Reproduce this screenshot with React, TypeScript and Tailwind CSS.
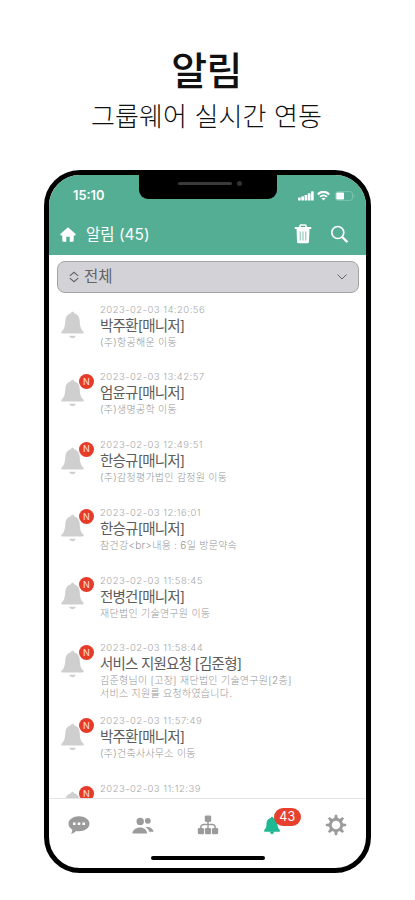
interface Notice {
  date: string
  title?: string
  body?: string[]
  isNew: boolean
}

const notices: Notice[] = [
  { date: "2023-02-03 14:20:56", title: "박주환[매니저]", body: ["(주)항공해운 이동"], isNew: false },
  { date: "2023-02-03 13:42:57", title: "엄윤규[매니저]", body: ["(주)생명공학 이동"], isNew: true },
  { date: "2023-02-03 12:49:51", title: "한승규[매니저]", body: ["(주)감정평가법인 감정원 이동"], isNew: true },
  { date: "2023-02-03 12:16:01", title: "한승규[매니저]", body: ["참건강<br>내용 : 6일 방문약속"], isNew: true },
  { date: "2023-02-03 11:58:45", title: "전병건[매니저]", body: ["재단법인 기술연구원 이동"], isNew: true },
  {
    date: "2023-02-03 11:58:44",
    title: "서비스 지원요청 [김준형]",
    body: ["김준형님이 [고장] 재단법인 기술연구원[2층]", "서비스 지원를 요청하였습니다."],
    isNew: true,
  },
  { date: "2023-02-03 11:57:49", title: "박주환[매니저]", body: ["(주)건축사사무소 이동"], isNew: true },
  { date: "2023-02-03 11:12:39", isNew: true },
]

const gearAngles = [0, 45, 90, 135, 180, 225, 270, 315]

function BellIcon() {
  return (
    <svg viewBox="0 0 23 28" className="h-7 w-[23px] fill-[#cfcfcf]">
      <path d="M11.5.8c1 0 1.500.7 1.600 1.500 3.500.9 5.400 3.600 5.600 7.300.2 5.200.8 8.400 3.600 11 .9.900.500 1.900-.7 1.900H1.400c-1.200 0-1.600-1-.7-1.900 2.800-2.600 3.400-5.800 3.600-11 .2-3.700 2.100-6.400 5.600-7.300.1-.8.6-1.500 1.600-1.500z" />
      <path d="M8.200 24.800h6.600c-.6 1.600-1.600 2.400-3.300 2.400s-2.700-.8-3.300-2.400z" />
    </svg>
  )
}

function StatusIcons() {
  return (
    <div className="flex items-center text-white">
      <svg viewBox="0 0 16 10" className="h-2.5 w-4" fill="currentColor">
        <rect x="0" y="6.5" width="2.7" height="3" rx="0.6" />
        <rect x="3.3" y="5.3" width="2.7" height="4.2" rx="0.6" />
        <rect x="6.6" y="4" width="2.7" height="5.5" rx="0.6" />
        <rect x="9.8" y="2.2" width="2.7" height="7.3" rx="0.6" />
        <rect x="13" y="0.3" width="2.7" height="9.2" rx="0.6" />
      </svg>
      <svg viewBox="0 0 13 10" className="ml-[3px] h-2.5 w-[13px]" fill="none" stroke="currentColor">
        <path d="M.8 3.5C4-.1 9-.1 12.2 3.5" strokeWidth="2.2" />
        <path d="M3 5.9C5 3.8 8 3.8 10 5.9" strokeWidth="1.9" />
        <path d="M6.5 9.500 4.500 7.500Q6.500 5.900 8.500 7.500Z" fill="currentColor" stroke="none" />
      </svg>
      <svg viewBox="0 0 20 10" className="ml-[5px] h-2.5 w-5">
        <rect x="0.5" y="0.5" width="17" height="9" rx="2.5" fill="none" stroke="#79c2aa" />
        <rect x="1.3" y="1.400" width="7.700" height="7.200" rx="1" fill="currentColor" />
        <path d="M19 3.500v3" stroke="#79c2aa" />
      </svg>
    </div>
  )
}

function Header() {
  return (
    <header className="h-20 shrink-0 bg-[#54ae94] text-white">
      <div className="flex h-10 items-center justify-between pl-6 pr-[11px] pt-px">
        <span className="text-[12.8px] font-semibold">15:10</span>
        <StatusIcons />
      </div>
      <div className="flex h-[38px] items-center pl-[11px] pr-[17px]">
        <svg viewBox="0 0 16 15" className="h-[15px] w-4" fill="currentColor">
          <path d="M8 .3 15.900 7.300 15 8.500H13.700V13.700Q13.700 14.700 12.700 14.700H9.700V9.700H6.300V14.700H3.300Q2.300 14.700 2.300 13.700V8.500H1L.1 7.300Z" />
        </svg>
        <h2 className="ml-[10px] pt-0.5 text-[15.5px]">알림 (45)</h2>
        <svg viewBox="0 0 18 20" className="ml-auto h-5 w-[18px]">
          <path d="M6 3V1.800Q6 1 6.800 1h4.400q.8 0 .8.8V3" fill="none" stroke="currentColor" strokeWidth="1.600" />
          <path d="M.8 3h16.400v2H.8zM2.500 5h13l-.5 12.700q-.1 1.600-1.600 1.600H4.600q-1.500 0-1.600-1.600z" fill="currentColor" />
          <path d="M6.200 7.500v9M9 7.500v9M11.800 7.500v9" stroke="#7fc4ae" strokeWidth="1" />
        </svg>
        <svg viewBox="0 0 19 19" className="ml-[18px] h-[19px] w-[19px]" fill="none" stroke="currentColor">
          <circle cx="7.800" cy="7.500" r="6" strokeWidth="1.700" />
          <path d="m12.200 12 5.200 5.200" strokeWidth="2.400" />
        </svg>
      </div>
    </header>
  )
}

function NoticeRow({ notice }: { notice: Notice }) {
  const lines = notice.body ?? []

  return (
    <li className={lines.length > 1 ? "flex h-[73px] shrink-0" : "flex h-[67.8px] shrink-0"}>
      <div className="relative ml-3 mt-2 h-7 w-[23px]">
        <BellIcon />
        {notice.isNew && (
          <span className="absolute -top-[5px] left-[18px] flex h-[15px] w-[15px] items-center justify-center rounded-full bg-[#e63b29] text-[9px] font-medium text-[#ffd0c9]">
            N
          </span>
        )}
      </div>
      <div className="ml-4 whitespace-nowrap pt-[0.5px]">
        <p className="h-3 text-[9.5px] font-light leading-3 tracking-[0.48px] text-[#a8a8a8]">{notice.date}</p>
        {notice.title && (
          <p className="h-5 text-[14.5px] leading-5 tracking-[-0.78px] text-[#5c5c5c]">{notice.title}</p>
        )}
        {lines.map((line) => (
          <p key={line} className="h-[13px] text-[10px] font-light leading-[13px] tracking-[0.27px] text-[#969696]">
            {line}
          </p>
        ))}
      </div>
    </li>
  )
}

function TabBar() {
  return (
    <nav className="h-[70px] shrink-0 border-t border-[#e5e5e5] text-[#9b9b9b]">
      <div className="flex h-[52px] items-center justify-between px-[19px]">
        <svg viewBox="0 0 22 20" className="h-5 w-[22px]">
          <path
            d="M11 1.300c5.800 0 10.500 3.200 10.500 7.500s-4.700 7.500-10.500 7.500c-1 0-2-.1-2.900-.3-1.300 1.400-3 2.500-5.300 2.800 1-1.100 1.600-2.500 1.400-4.300C1.900 13.100.5 11.100.5 8.800.5 4.500 5.200 1.300 11 1.300z"
            fill="currentColor"
          />
          <path d="M5 7.500h2.600v2.600H5zM9.700 7.500h2.600v2.600H9.700zM14.400 7.500H17v2.600h-2.600z" fill="white" />
        </svg>
        <svg viewBox="0 0 22 17" className="h-[17px] w-[22px]" fill="currentColor">
          <circle cx="8.200" cy="4.400" r="3.700" />
          <circle cx="15.800" cy="3.800" r="2.900" />
          <path d="M.3 16.500c.6-3.800 3.700-6 7.900-6 3.800 0 6.600 2.200 7 6zM13.200 10.200c4-1 7.500.9 8.500 4.500h-4.400c-.7-2-2.100-3.600-4.100-4.500z" />
        </svg>
        <svg viewBox="0 0 22 20" className="h-5 w-[22px]" fill="currentColor">
          <rect x="7.800" y=".5" width="6.400" height="6.400" rx="1.300" />
          <rect x=".8" y="13" width="6.200" height="6.300" rx="1.300" />
          <rect x="7.900" y="13" width="6.200" height="6.300" rx="1.300" />
          <rect x="15" y="13" width="6.200" height="6.300" rx="1.300" />
          <path d="M11 6v8M3.800 14v-1.500Q3.800 9.500 6.800 9.500h8.400q3 0 3 3V14" fill="none" stroke="currentColor" strokeWidth="1.400" />
        </svg>
        <div className="relative flex w-[22px] justify-center text-[#1eb893]">
          <svg viewBox="0 0 16 19" className="h-[19px] w-4" fill="currentColor">
            <path d="M8 .8Q9 .8 9.300 2c2.800.7 4.100 2.800 4.200 5.500.1 3 .3 4.200 1.100 5l1.200 1.500v1.800H.2V14l1.200-1.500c.8-.8 1-2 1.100-5C2.600 4.800 3.900 2.700 6.700 2Q7 .8 8 .8z" />
            <path d="M5.800 15.600h4.400Q9.700 18.200 8 18.200T5.800 15.600z" />
          </svg>
          <span className="absolute -top-2 left-[13px] flex h-[18px] w-[27px] items-center justify-center rounded-full bg-[#e6412e] pt-px text-[12.5px] text-white">
            43
          </span>
        </div>
        <svg viewBox="0 0 22 22" className="h-[22px] w-[22px]" fill="currentColor">
          {gearAngles.map((angle) => (
            <path key={angle} d="M9.200 4.500 9.900.8h2.200l.7 3.700z" transform={`rotate(${angle} 11 11)`} />
          ))}
          <circle cx="11" cy="11" r="5.700" fill="none" stroke="currentColor" strokeWidth="2.900" />
        </svg>
      </div>
      <div className="mx-auto mt-[5px] h-[4px] w-[114px] rounded-full bg-black" />
    </nav>
  )
}

export default function App() {
  return (
    <main className="h-[900px] w-[415px] overflow-hidden bg-white font-['Inter','Noto_Sans_CJK_KR',sans-serif]">
      <div className="flex h-[170px] flex-col items-center pr-[2px] pt-[44px] text-[#111]">
        <h1 className="text-[39px] font-medium leading-[54px] tracking-[-0.6px]">알림</h1>
        <p className="text-[26px] font-light leading-[38px] tracking-[0.1px]">그룹웨어 실시간 연동</p>
      </div>

      <div className="relative ml-11 flex h-[703px] w-[327px] flex-col overflow-hidden rounded-[36px] border-[5px] border-black bg-white">
        <Header />

        {/* Notch */}
        <div className="absolute left-[90px] top-0 h-6 w-[138px] rounded-b-[9px] bg-black">
          <div className="absolute left-[39px] top-[7px] h-[3px] w-[54px] rounded-full bg-[#3a3a3a]" />
          <div className="absolute left-[98px] top-[6px] h-[5px] w-[5px] rounded-full bg-[#333]" />
        </div>

        {/* Category filter */}
        <div className="ml-2 mr-[7px] mt-1.5 flex h-8 shrink-0 items-center rounded-[8px] border border-[#a4a3a8] bg-[#d3d2d7] pl-[11px] pr-2.5 text-[#626267]">
          <svg viewBox="0 0 10 12" className="h-3 w-[10px]" fill="none" stroke="currentColor" strokeWidth="1.100">
            <path d="m.8 4.800 4.200-3.500 4.200 3.500M.8 7.200 5 10.700l4.200-3.500" />
          </svg>
          <span className="ml-[5px] text-[15.5px]">전체</span>
          <svg viewBox="0 0 12 8" className="ml-auto h-2 w-3" fill="none" stroke="currentColor" strokeWidth="1">
            <path d="m1.500 1.500 4.500 4.500 4.500-4.500" />
          </svg>
        </div>

        <ul className="flex min-h-0 flex-1 flex-col overflow-hidden pt-2.5">
          {notices.map((notice) => (
            <NoticeRow key={notice.date} notice={notice} />
          ))}
        </ul>

        <TabBar />
      </div>
    </main>
  )
}
